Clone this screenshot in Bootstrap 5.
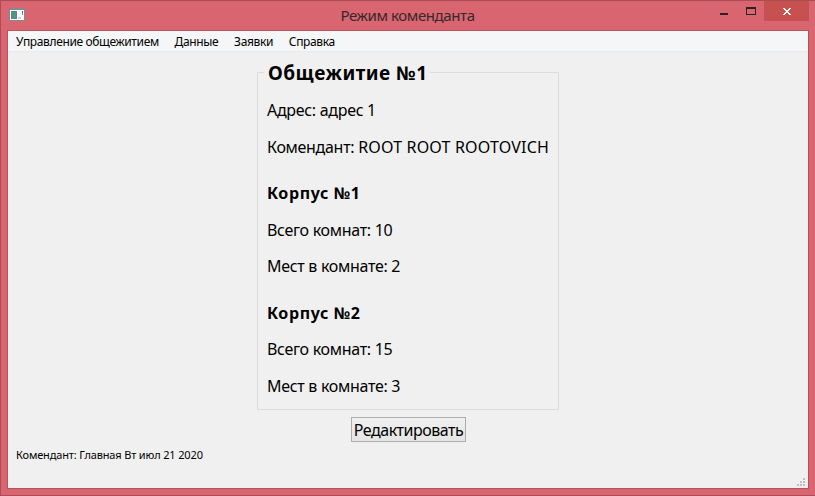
<!DOCTYPE html>
<html lang="ru">
<head>
<meta charset="utf-8">
<title>Режим коменданта</title>
<link href="https://cdn.jsdelivr.net/npm/bootstrap@5.3.0/dist/css/bootstrap.min.css" rel="stylesheet">
<style>
body{font-family:"Noto Sans",sans-serif;color:#000;background:#d8656f}
.window{height:496px;border:1px solid #a94e57;border-right:0;background:#d8656f;padding:0 6px 6px}
.titlebar{height:29px;position:relative}
.app-icon{margin:7px 0 0 2px}
.caption-text{font-size:15px;letter-spacing:-.4px;line-height:28px;color:#36282c;padding-right:19px}
.controls{position:absolute;right:0;top:0}
.controls svg{display:block}
.client{height:459px;border:1px solid #b8535d;background:#f0f0f0}
.menubar{height:21px;background:#f5f6f7;border-bottom:1px solid #e8eaec;font-size:12px;line-height:21px;letter-spacing:-.36px;gap:15.8px;padding-left:8px}
.menubar a{color:#000;text-decoration:none}
.group{width:302px;height:338px;border:1px solid #dcdcdc;margin-top:20px;padding:0 0 0 9px;font-size:16px;line-height:20px}
.group-title{font-size:19px;line-height:24px;letter-spacing:.5px;background:#f0f0f0;margin:-12px 0 15px -3px;padding:0 2px 0 4px;width:max-content}
.row-text{margin-bottom:16.5px;letter-spacing:-.3px;white-space:nowrap}
.full-name{letter-spacing:.18px}
.head-text{margin:26px 0 17px;letter-spacing:.6px;font-weight:700}
.head-second{margin:26.6px 0 16.6px}
.head-second + .row-text{margin-bottom:16.9px}
.edit-btn{width:115px;height:25px;margin:7px 0 0 1px;padding:0;border:1px solid #adadad;border-radius:0;background:linear-gradient(#f0f0f0,#e5e5e5);color:#000;font-size:16px;line-height:25px;letter-spacing:-.5px}
.status-text{font-size:11px;line-height:16px;letter-spacing:-.15px;padding-left:8px;margin-top:5px}
.grip{margin:auto 3px 2px auto}
</style>
</head>
<body>
<div class="window">
  <div class="titlebar d-flex align-items-start">
    <svg class="app-icon" width="16" height="13" viewBox="0 0 16 13"><path fill="#85898d" d="M0 0h16v13H0z"/><path fill="#fff" d="M1 2h14v10H1z"/><path fill="#5b7f9c" d="M2 3h6v8H2z"/><path fill="#4d9a7c" d="M3 4h4v6H3z"/><path fill="#3f5f98" d="M13 3h1v2h-1z"/><path fill="#4d9a7c" d="M13 5h1v2h-1z"/><path fill="#d3d3d3" d="M9 9h3v2H9z"/></svg>
    <div class="caption-text flex-grow-1 text-center">Режим коменданта</div>
    <div class="controls"><svg width="95" height="20" shape-rendering="crispEdges"><path d="M6 12h8v2H6z" fill="#2b2226"/><path d="M32 6h10v8H32zM33 8v5h8V8z" fill="#2b2226" fill-rule="evenodd"/><path d="M50 0h45v20H50z" fill="#c75050"/><path d="M69 7h2v1h1v1h2V8h1V7h2v1h-1v1h-1v1h-1v1h1v1h1v1h1v1h-2v-1h-1v-1h-2v1h-1v1h-2v-1h1v-1h1v-1h1v-1h-1V9h-1V8h-1z" fill="#fff"/></svg></div>
  </div>
  <div class="client d-flex flex-column">
    <nav class="menubar d-flex flex-shrink-0"><a href="#">Управление общежитием</a><a href="#">Данные</a><a href="#">Заявки</a><a href="#">Справка</a></nav>
    <main class="d-flex flex-column align-items-center">
      <section class="group">
        <div class="group-title fw-bold">Общежитие №1</div>
        <div class="row-text">Адрес: адрес 1</div>
        <div class="row-text">Комендант: <span class="full-name">ROOT ROOT ROOTOVICH</span></div>
        <div class="head-text">Корпус №1</div>
        <div class="row-text">Всего комнат: 10</div>
        <div class="row-text">Мест в комнате: 2</div>
        <div class="head-text head-second">Корпус №2</div>
        <div class="row-text">Всего комнат: 15</div>
        <div class="row-text">Мест в комнате: 3</div>
      </section>
      <button class="btn edit-btn">Редактировать</button>
    </main>
    <div class="status-text">Комендант: Главная Вт июл 21 2020</div>
    <svg class="grip" width="8" height="8" fill="#bfbfbf"><path d="M6 0h2v2H6zM3 3h2v2H3zM6 3h2v2H6zM0 6h2v2H0zM3 6h2v2H3zM6 6h2v2H6z"/></svg>
  </div>
</div>
<script src="https://cdn.jsdelivr.net/npm/bootstrap@5.3.0/dist/js/bootstrap.bundle.min.js"></script>
</body>
</html>
